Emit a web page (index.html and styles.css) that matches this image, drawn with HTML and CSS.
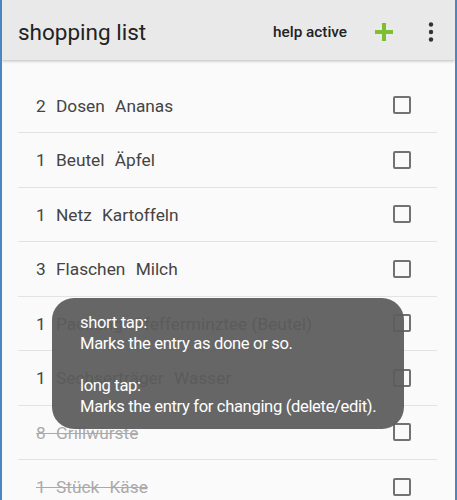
FILE: index.html
```html
<!DOCTYPE html>
<html>
<head>
<meta charset="utf-8">
<link rel="stylesheet" href="styles.css">
</head>
<body>
<div class="app">
  <header class="bar">
    <div class="title">shopping list</div>
    <div class="actions">
      <span class="help">help active</span>
      <svg class="plus" width="20" height="20" viewBox="0 0 20 20"><rect x="8" y="1" width="4" height="18" fill="#7dbf2e"/><rect x="1" y="8" width="18" height="4" fill="#7dbf2e"/></svg>
      <svg class="kebab" width="6" height="20" viewBox="0 0 6 20"><circle cx="3" cy="2.5" r="2.2" fill="#333"/><circle cx="3" cy="10" r="2.2" fill="#333"/><circle cx="3" cy="17.5" r="2.2" fill="#333"/></svg>
    </div>
  </header>
  <ul class="list">
    <li class="row"><span class="txt">2 Dosen Ananas</span><span class="box"></span></li>
    <li class="row"><span class="txt">1 Beutel Äpfel</span><span class="box"></span></li>
    <li class="row"><span class="txt">1 Netz Kartoffeln</span><span class="box"></span></li>
    <li class="row"><span class="txt">3 Flaschen Milch</span><span class="box"></span></li>
    <li class="row"><span class="txt">1 Packung <span class="name">Pfefferminztee (Beutel)</span></span><span class="box"></span></li>
    <li class="row"><span class="txt">1 Sechserträger Wasser</span><span class="box"></span></li>
    <li class="row done"><span class="txt">8 Grillwürste</span><span class="box"></span></li>
    <li class="row done"><span class="txt">1 Stück Käse</span><span class="box"></span></li>
  </ul>
  <div class="toast">
    <p>short tap:<br>Marks the entry as done or so.</p>
    <p>long tap:<br>Marks the entry for changing (delete/edit).</p>
  </div>
</div>
</body>
</html>
```
FILE: styles.css
```css
html, body {
  margin: 0;
  padding: 0;
  height: 100%;
  overflow: hidden;
}
body {
  font-family: Roboto, "Noto Sans", sans-serif;
  background: #fafafa;
}
.app {
  position: relative;
  height: 500px;
  border-left: 2px solid #4a86c4;
  border-right: 2px solid #4a86c4;
  background: #fafafa;
  overflow: hidden;
}
.bar {
  height: 60px;
  background: #e9e9e9;
  display: flex;
  align-items: center;
  justify-content: space-between;
  padding: 3px 21px 0 16px;
  box-sizing: border-box;
  box-shadow: 0 1px 3px rgba(0,0,0,0.25);
  position: relative;
  z-index: 1;
}
.title {
  font-size: 22.5px;
  color: #222;
}
.actions {
  display: flex;
  align-items: center;
}
.help {
  font-size: 15.3px;
  font-weight: 500;
  color: #222;
  margin-right: 27px;
}
.plus {
  margin-right: 34px;
}
.list {
  list-style: none;
  margin: 0 18px 0 16px;
  padding: 18.5px 0 0 0;
}
.row {
  height: 53.5px;
  border-bottom: 1px solid #e3e3e3;
  display: flex;
  align-items: center;
  justify-content: space-between;
  padding: 0 26px 0 18px;
}
.txt {
  font-size: 17.3px;
  color: #444;
  word-spacing: 6px;
  padding-top: 1px;
}
.name {
  word-spacing: normal;
}
.done .txt {
  color: #aaa;
  text-decoration: line-through;
}
.box {
  width: 14px;
  height: 14px;
  border: 2px solid #727272;
  border-radius: 2px;
}
.toast {
  position: absolute;
  left: 50px;
  top: 298px;
  width: 352px;
  height: 131px;
  box-sizing: border-box;
  padding: 14px 18px 0 28px;
  background: rgba(92,92,92,0.94);
  border-radius: 22px;
  color: #fff;
  font-size: 16.6px;
  line-height: 21px;
  letter-spacing: -0.35px;
}
.toast p {
  margin: 0 0 21px 0;
}
```
